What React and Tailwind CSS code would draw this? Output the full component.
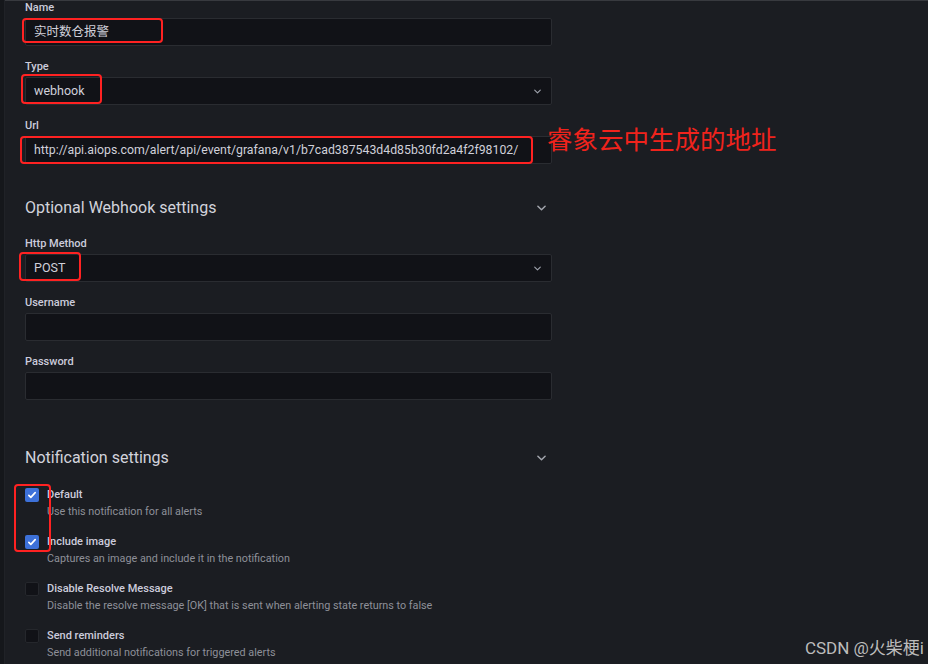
import React from "react";

const font = { fontFamily: 'Roboto, "Noto Sans CJK SC", sans-serif' };

function Chevron({ className }) {
  return (
    <svg viewBox="0 0 10 6" className={className} fill="none" stroke="currentColor" strokeWidth="1.6" strokeLinecap="round" strokeLinejoin="round">
      <path d="M1 1l4 4 4-4" />
    </svg>
  );
}

function Field({ label, value, select, mono }) {
  return (
    <div className="mb-[14px]">
      <div className="text-[11px] leading-[14px] font-medium text-[#ccccdc] mb-[3px]">{label}</div>
      <div className="h-[28px] flex items-center justify-between bg-[#111217] border border-[#2a2c31] rounded-[2px] pl-[8px] pr-[10px]">
        <span className={`text-[#d0d0da] ${mono ? "text-[12.3px]" : "text-[12.5px]"}`}>{value}</span>
        {select && <Chevron className="w-[7px] h-[5px] text-[#9fa3ad]" />}
      </div>
    </div>
  );
}

function Section({ title, className }) {
  return (
    <div className={`flex items-center justify-between h-[24px] ${className}`}>
      <span className="text-[16px] text-[#d2d3dc]">{title}</span>
      <Chevron className="w-[9px] h-[6px] mr-[6px] text-[#a3a6ae]" />
    </div>
  );
}

function Check({ checked, label, desc }) {
  return (
    <div className="flex mb-[13px]">
      <div
        className={`w-[14px] h-[14px] mt-[1px] rounded-[2px] flex items-center justify-center ${
          checked ? "bg-[#3d71d9]" : "bg-[#111217] border border-[#25272c]"
        }`}
      >
        {checked && (
          <svg viewBox="0 0 12 12" className="w-[10px] h-[10px]" fill="none" stroke="white" strokeWidth="2" strokeLinecap="round" strokeLinejoin="round">
            <path d="M2.2 6.4l2.4 2.4 5.2-5.6" />
          </svg>
        )}
      </div>
      <div className="ml-[8px]">
        <div className="text-[11px] leading-[16px] font-medium text-[#ccccdc]">{label}</div>
        <div className="text-[10.8px] leading-[18px] text-[#8e9099]">{desc}</div>
      </div>
    </div>
  );
}

export default function App() {
  return (
    <div className="relative w-[928px] h-[664px] overflow-hidden bg-[#1b1d22] flex" style={font}>
      <div className="w-[5px] h-full bg-[#15171b] border-r border-[#202227]" />
      <div className="flex-1 border-t border-[#383a3f]">
        <div className="w-[527px] ml-[20px]">
          <Field label="Name" value="实时数仓报警" />
          <Field label="Type" value="webhook" select />
          <Field
            label="Url"
            value="http://api.aiops.com/alert/api/event/grafana/v1/b7cad387543d4d85b30fd2a4f2f98102/"
            mono
          />

          {/* margins collapse with the field's mb-[14px] */}
          <Section title="Optional Webhook settings" className="mt-[32px] mb-[17px]" />
          <Field label="Http Method" value="POST" select />
          <Field label="Username" value="" />
          <Field label="Password" value="" />

          <Section title="Notification settings" className="mt-[46px] mb-[17px]" />
          <Check checked label="Default" desc="Use this notification for all alerts" />
          <Check checked label="Include image" desc="Captures an image and include it in the notification" />
          <Check
            label="Disable Resolve Message"
            desc="Disable the resolve message [OK] that is sent when alerting state returns to false"
          />
          <Check label="Send reminders" desc="Send additional notifications for triggered alerts" />
        </div>
      </div>

      {/* red annotations */}
      <div className="absolute left-[22px] top-[18px] w-[141px] h-[25px] border-2 border-[#ff2222] rounded-[4px]" />
      <div className="absolute left-[21px] top-[74px] w-[81px] h-[30px] border-2 border-[#ff2222] rounded-[4px]" />
      <div className="absolute left-[20px] top-[136px] w-[513px] h-[28px] border-2 border-[#ff2222] rounded-[4px]" />
      <div className="absolute left-[19px] top-[252px] w-[62px] h-[29px] border-2 border-[#ff2222] rounded-[4px]" />
      <div className="absolute left-[14px] top-[484px] w-[37px] h-[68px] border-2 border-[#ff2222] rounded-[4px]" />
      <div className="absolute left-[547px] top-[126px] text-[25.5px] leading-[28px] text-[#f0231c]">睿象云中生成的地址</div>

      <div className="absolute right-[4px] top-[637px] text-[17px] leading-[22px] text-[#bcbcbc]">CSDN @火柴梗i</div>
    </div>
  );
}
